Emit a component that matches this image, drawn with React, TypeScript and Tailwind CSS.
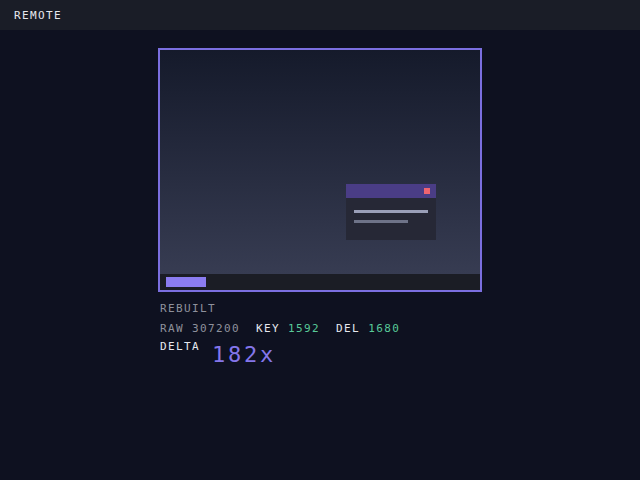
import React from "react";

const mono = { fontFamily: '"DejaVu Sans Mono", "Liberation Mono", monospace' };

export default function App() {
  return (
    <div className="w-[640px] h-[480px] bg-[#0e1120] flex flex-col overflow-hidden" style={mono}>
      <div className="h-[30px] shrink-0 bg-[#1a1d27] flex items-center pl-[14px]">
        <span className="text-[11px] leading-none tracking-[1.38px] text-[#e6e8ee]">REMOTE</span>
      </div>
      <div className="flex justify-center pt-[18px]">
        <div className="w-[324px] flex flex-col">
          <div className="w-[324px] h-[244px] border-2 border-[#7b6fe0] flex flex-col">
            <div className="relative flex-1 bg-gradient-to-b from-[#151a2b] to-[#373c52]">
              <div className="absolute left-[186px] top-[134px] w-[90px] h-[56px] bg-[#262836] flex flex-col">
                <div className="h-[14px] bg-[#4a3d86] flex items-center justify-end pr-[6px]">
                  <div className="w-[6px] h-[6px] bg-[#f06470]" />
                </div>
                <div className="flex flex-col pl-[8px] pt-[12px] gap-[7px]">
                  <div className="w-[74px] h-[3px] bg-[#9a9fb8]" />
                  <div className="w-[54px] h-[3px] bg-[#6e7388]" />
                </div>
              </div>
            </div>
            <div className="h-[16px] shrink-0 bg-[#1b1d25] flex items-center pl-[6px]">
              <div className="w-[40px] h-[10px] bg-[#8b7cf0]" />
            </div>
          </div>
          <div className="pl-[2px] flex flex-col text-[11px] tracking-[1.38px] whitespace-pre">
            <div className="h-[20px] leading-[20px] mt-[7px] text-[#8e919c]">REBUILT</div>
            <div className="h-[19px] leading-[20px] text-[#8e919c]">
              RAW 307200  <span className="text-[#e6e8ee]">KEY</span> <span className="text-[#58c998]">1592</span>  <span className="text-[#e6e8ee]">DEL</span> <span className="text-[#58c998]">1680</span>
            </div>
            <div className="flex items-start">
              <div className="h-[18px] leading-[18px] text-[#e6e8ee]">DELTA</div>
              <div className="ml-[12px] mt-[2px] text-[22px] leading-[30px] tracking-[2.76px] text-[#8476ea]">182x</div>
            </div>
          </div>
        </div>
      </div>
    </div>
  );
}
